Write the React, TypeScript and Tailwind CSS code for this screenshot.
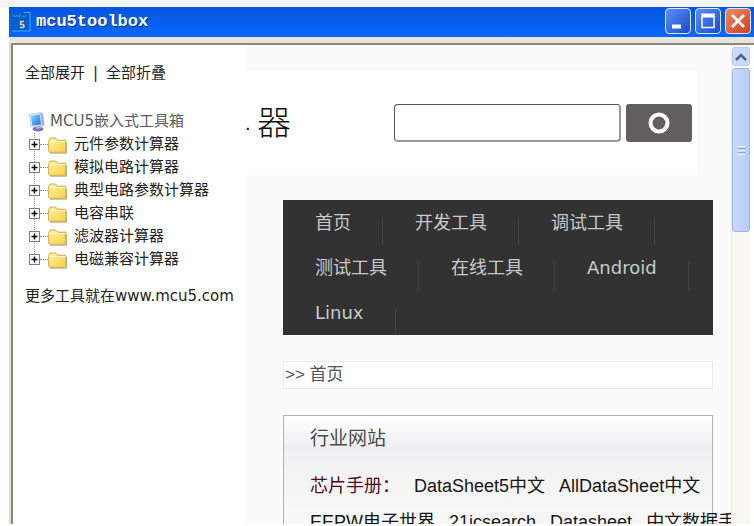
import React from "react";

const folders = [
  "元件参数计算器",
  "模拟电路计算器",
  "典型电路参数计算器",
  "电容串联",
  "滤波器计算器",
  "电磁兼容计算器",
];

const navItems = ["首页", "开发工具", "调试工具", "测试工具", "在线工具", "Android", "Linux"];

const dejavu = "font-['DejaVu_Sans','Noto_Sans_CJK_SC',sans-serif]";
const arial = "font-['Liberation_Sans','Noto_Sans_CJK_SC',sans-serif]";

function AppIcon() {
  return (
    <svg width="20" height="20" viewBox="0 0 20 20" aria-hidden="true">
      <rect x="0" y="0" width="19" height="19" fill="#0b5ccd" />
      <path d="M13 .5h6v18.500H1" fill="none" stroke="#3fb0f5" />
      <path d="M3 5V3l1.500 1.500L6 3v2M10 3H8v2h2M12 3v2h2V3" fill="none" stroke="#2f8fe8" />
      <path d="M13 9.500H9.700v3h2q1.300 0 1.300 1.500t-1.300 1.500H9" fill="none" stroke="#e9c9b0" strokeWidth="1.700" />
    </svg>
  );
}

function ComputerIcon() {
  return (
    <svg width="17" height="20" viewBox="0 0 17 20" aria-hidden="true">
      <defs>
        <linearGradient id="screen" x1="0" y1="0" x2="1" y2="1">
          <stop offset="0" stopColor="#8fd6fb" />
          <stop offset="0.5" stopColor="#4fa9f2" />
          <stop offset="1" stopColor="#2a6cdc" />
        </linearGradient>
      </defs>
      <ellipse cx="9" cy="17" rx="5.500" ry="2.400" fill="#7376b4" />
      <path d="M7 13l5-1 1 4-6 1z" fill="#a9b4dd" />
      <path d="M.5 2.500L11.500.5l1.500 13L2 14.500z" fill="#dcecfb" stroke="#a3c4e6" strokeWidth=".7" />
      <path d="M11.500.5l2.500 1 1.500 11.500-2.500 1z" fill="#9fb0e2" />
      <path d="M2 4l8.700-1.800 1.200 10.200-8.700 1z" fill="url(#screen)" />
    </svg>
  );
}

function FolderIcon() {
  return (
    <svg width="20" height="18" viewBox="0 0 20 18" aria-hidden="true">
      <defs>
        <linearGradient id="folder" x1="0" y1="0" x2="1" y2="1">
          <stop offset="0" stopColor="#fff3a2" />
          <stop offset="1" stopColor="#f5d045" />
        </linearGradient>
      </defs>
      <path d="M2 17.300h16.500V6" fill="none" stroke="#8d8765" strokeWidth="1" opacity=".6" />
      <path d="M.7 15.500V4.500L2.200 2h5.300l2 2.200h8.300v12.100H1.500z" fill="url(#folder)" stroke="#c9a23b" strokeWidth=".9" />
      <path d="M1.500 5.500h16" fill="none" stroke="#fffad0" />
    </svg>
  );
}

function Expander() {
  return (
    <svg width="11" height="11" viewBox="0 0 11 11" aria-hidden="true">
      <rect x=".5" y=".5" width="10" height="10" fill="#fff" stroke="#7d7d7d" />
      <path d="M2.500 5.500h6M5.500 2.500v6" stroke="#000" strokeWidth="1.500" />
    </svg>
  );
}

function TitleBar() {
  const box =
    "flex h-[26px] w-[26px] items-center justify-center rounded-[4px] border border-[#dce8fb]";
  return (
    <header className="flex h-[30px] shrink-0 items-center bg-gradient-to-b from-[#0453dc] via-[#0460ee] to-[#0567fa] pr-[3px] pl-[2px]">
      <AppIcon />
      <h1 className="ml-[5px] flex-1 font-['Liberation_Mono',monospace] text-[17px] leading-5 font-bold text-white [text-shadow:1px_1px_0_#0a3186]">
        mcu5toolbox
      </h1>
      <div className="flex gap-[4px] pb-[2px]">
        <button aria-label="Minimize" className={box + " bg-gradient-to-br from-[#5e8df2] to-[#1c49cf]"}>
          <svg width="20" height="20" viewBox="0 0 20 20">
            <path d="M4 15.500h9" stroke="#fff" strokeWidth="4" />
          </svg>
        </button>
        <button aria-label="Maximize" className={box + " bg-gradient-to-br from-[#5e8df2] to-[#1c49cf]"}>
          <svg width="20" height="20" viewBox="0 0 20 20">
            <path d="M4 4.500v12h12v-12" fill="none" stroke="#fff" strokeWidth="1.500" />
            <path d="M3.250 4.500h13.500" stroke="#fff" strokeWidth="4" />
          </svg>
        </button>
        <button aria-label="Close" className={box + " bg-gradient-to-br from-[#ea8a68] to-[#d13a14]"}>
          <svg width="20" height="20" viewBox="0 0 20 20">
            <path d="M4 4l12 12M16 4L4 16" stroke="#fff" strokeWidth="2.700" />
          </svg>
        </button>
      </div>
    </header>
  );
}

function Sidebar() {
  return (
    <aside className={dejavu + " w-[232px] shrink-0 pt-4 pl-3 text-[15px] whitespace-nowrap text-[#222]"}>
      <div className="flex h-6 items-center">
        <button>全部展开</button>
        <span className="mx-2 w-[5px] text-center">|</span>
        <button>全部折叠</button>
      </div>
      <div className="mt-[25px] flex h-[23px] items-center pl-1 text-[#5c5c5c]">
        <ComputerIcon />
        <span className="ml-1">MCU5嵌入式工具箱</span>
      </div>
      <ul className="ml-[9px] flow-root border-l border-dotted border-[#999]">
        {folders.map((name) => (
          <li key={name} className="-ml-[6px] flex h-[23px] items-center last:-mb-[11px]">
            <button aria-label={"展开 " + name}>
              <Expander />
            </button>
            <span className="w-2 border-t border-dotted border-[#888]" />
            <FolderIcon />
            <a href="#" className="ml-[6px]">
              {name}
            </a>
          </li>
        ))}
      </ul>
      <p className="mt-6 leading-6">更多工具就在www.mcu5.com</p>
    </aside>
  );
}

function SearchHeader() {
  return (
    <div className="mt-[26px] mr-[34px] flex h-[103px] items-center bg-white pr-[5px]">
      <div className={arial + " flex w-[149px] shrink-0 items-center text-[34px] font-light text-[#111]"}>
        <span className="w-[12px] text-[20px]">.</span>
        <span className="leading-9">器</span>
      </div>
      <form className="flex flex-1 gap-[5px]" onSubmit={(e) => e.preventDefault()}>
        <input
          type="text"
          aria-label="搜索"
          className="h-[38px] min-w-0 flex-1 rounded-[4px] border border-r-2 border-b-2 border-t-[#555] border-r-[#9a9a9a] border-b-[#9a9a9a] border-l-[#555] bg-white px-2 text-[16px] outline-none"
        />
        <button aria-label="搜索" className="flex h-[38px] w-[66px] items-center justify-center rounded-[3px] bg-[#625f5f]">
          <svg width="22" height="22" viewBox="0 0 22 22">
            <circle cx="11" cy="11" r="8.500" fill="none" stroke="#fff" strokeWidth="4" />
          </svg>
        </button>
      </form>
    </div>
  );
}

function Main() {
  return (
    <main className={arial + " min-w-0 flex-1 overflow-hidden bg-[#fbfbfc]"}>
      <SearchHeader />
      <div className="mt-[26px] mr-[18px] ml-[38px]">
        <nav className={dejavu + " flex flex-wrap bg-[#323232] text-[18px] text-[#cacaca]"}>
          {navItems.map((item) => (
            <a
              key={item}
              href="#"
              className="h-[45px] bg-[linear-gradient(#414141,#414141)] bg-[length:1px_28px] bg-[position:right_bottom] bg-no-repeat px-8 leading-[45px]"
            >
              {item}
            </a>
          ))}
        </nav>
        <div className="mt-[26px] h-7 border border-[#ebebeb] bg-white pl-px text-[17px] leading-[26px] text-[#555]">
          &gt;&gt; <a href="#">首页</a>
        </div>
        <section className="mt-[26px] border border-[#b0b0b0] bg-[linear-gradient(#ffffff,#eeeff1_32px,#f3f3f3_56px,#f8f8f8_110px)] pt-[7px] pb-10 pl-[26px] text-[18px] whitespace-nowrap text-[#161616]">
          <h2 className="text-[19px] leading-8 text-[#4a4a4a]">行业网站</h2>
          <div className="mt-[13px] flex gap-[14px] leading-9">
            <span className="text-[#4c0c26]">芯片手册：</span>
            <a href="#">DataSheet5中文</a>
            <a href="#">AllDataSheet中文</a>
          </div>
          <div className="flex gap-[14px] leading-9">
            <a href="#">EEPW电子世界</a>
            <a href="#">21icsearch</a>
            <a href="#">Datasheet</a>
            <a href="#">中文数据手册</a>
          </div>
        </section>
      </div>
    </main>
  );
}

function Scrollbar() {
  return (
    <div className="mr-1 flex w-[19px] shrink-0 flex-col items-center border-l border-[#eeece2] bg-[#f8f7f2] pt-[2px]">
      <button aria-label="Scroll up" className="flex h-[19px] w-[18px] items-center justify-center rounded-[3px] border border-[#b9cbf3] bg-[#cbdafb]">
        <svg width="12" height="8" viewBox="0 0 12 8">
          <path d="M1 7l5-5 5 5" fill="none" stroke="#4d6185" strokeWidth="2.500" />
        </svg>
      </button>
      <div className="mt-[2px] flex h-[164px] w-[18px] flex-col items-center justify-center gap-px rounded-[3px] border border-[#9db5ea] bg-gradient-to-r from-[#cbdafe] to-[#b9ccfb]">
        <span className="h-px w-2 bg-[#eef4fe]" />
        <span className="h-px w-2 bg-[#8fa9e0]" />
        <span className="h-px w-2 bg-[#eef4fe]" />
        <span className="h-px w-2 bg-[#8fa9e0]" />
        <span className="h-px w-2 bg-[#eef4fe]" />
      </div>
    </div>
  );
}

export default function App() {
  return (
    <div className="flex h-screen flex-col bg-white pb-[2px]">
      <div className="h-[7px] shrink-0 bg-[#f5f5f5]" />
      <div className="ml-[9px] flex min-h-0 flex-1 flex-col">
        <TitleBar />
        <div className="h-[6px] shrink-0 bg-[#e6e4dc]" />
        <div className="flex min-h-0 flex-1 border-l-2 border-[#dedbd2]">
          <div className="flex min-w-0 flex-1 border-t-2 border-l-2 border-[#8f887c]">
            <Sidebar />
            <Main />
            <Scrollbar />
          </div>
        </div>
      </div>
    </div>
  );
}
